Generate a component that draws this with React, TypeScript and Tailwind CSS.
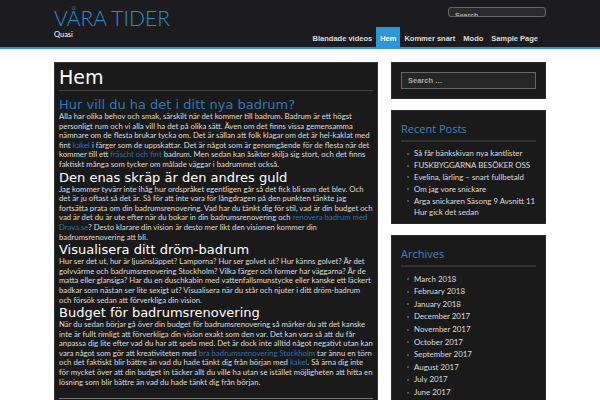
import React from 'react';

const recent = [
  'Så får bänkskivan nya kantlister',
  'FUSKBYGGARNA BESÖKER OSS',
  'Evelina, lärling – snart fullbetald',
  'Om jag vore snickare',
  'Arga snickaren Säsong 9 Avsnitt 11 Hur gick det sedan',
];

const archives = [
  'March 2018',
  'February 2018',
  'January 2018',
  'December 2017',
  'November 2017',
  'October 2017',
  'September 2017',
  'August 2017',
  'July 2017',
  'June 2017',
];

const nav = ['Blandade videos', 'Hem', 'Kommer snart', 'Modo', 'Sample Page'];

function A({ children }: { children: React.ReactNode }) {
  return <a className="text-[#2d6fa8]">{children}</a>;
}

function Widget({ title, items, gap }: { title: string; items: string[]; gap: string }) {
  return (
    <div className="bg-[#1a1a1a] border border-[#2a2a2a] px-[9px] pt-[10px] pb-[5px]">
      <h3 className="font-['Open_Sans',sans-serif] text-[11px] leading-[15px] text-[#3a86c2] pb-[4px] border-b-2 border-[#333]">{title}</h3>
      <ul className="mt-[6px] pl-[6px]">
        {items.map((t) => (
          <li key={t} className={`flex gap-[5px] font-['Lato',sans-serif] text-[7.9px] leading-[11px] text-[#ddd] ${gap}`}>
            <span className="mt-[4.5px] h-[2px] w-[2px] shrink-0 bg-[#555]" />
            <span className="w-[122px]">{t}</span>
          </li>
        ))}
      </ul>
    </div>
  );
}

const body = "font-['Lato',sans-serif] text-[7.75px] leading-[9.6px]";
const h2 = 'text-[13px] leading-[15px]';

export default function App() {
  return (
    <div className="h-[400px] overflow-hidden bg-white font-['DejaVu_Sans',sans-serif]">
      {/* header */}
      <header className="bg-[#1c1b1e] border-b-2 border-[#2d96d8]">
        <div className="mx-auto w-[492px] flex justify-between h-[47px]">
          <div className="pt-[5px]">
            <div className="font-['Lato',sans-serif] font-light text-[#2c8fd2] text-[21px] leading-[25px]">VÅRA TIDER</div>
            <div className="font-['Lato',sans-serif] text-white text-[7.5px] leading-[8px] mt-[1px]">Quasi</div>
          </div>
          <div className="flex flex-col items-end">
            <div className="mt-[7px] w-[98px] h-[10px] rounded-[3px] border border-[#666] bg-[#2a2a2a] overflow-hidden">
              <div className="font-['Liberation_Sans',sans-serif] text-[7px] leading-[7px] text-[#aaa] pl-[6px] pt-[4px] font-bold">Search</div>
            </div>
            <nav className="mt-auto flex font-['Liberation_Sans',sans-serif] text-[7.5px] font-bold text-[#ddd] mr-[4px]">
              {nav.map((n) => (
                <span
                  key={n}
                  className={
                    n === 'Hem'
                      ? 'bg-[#2d96d8] text-white px-[4px] pt-[8px] pb-[4px] leading-[8px]'
                      : 'px-[4px] pt-[8px] pb-[4px] leading-[8px]'
                  }
                >
                  {n}
                </span>
              ))}
            </nav>
          </div>
        </div>
      </header>

      <div className="mx-auto w-[492px] flex gap-[13px] mt-[13px]">
        {/* main */}
        <main className="w-[324px] bg-[#1a1a1a] border border-[#333] px-[4px] pt-[2px] pb-[8px] text-[#ddd]">
          <h1 className="text-[19px] leading-[24px] text-white pb-[1px] border-b border-[#444]">Hem</h1>
          <h2 className={`mt-[6px] ${h2} text-[#2f79b8]`}>Hur vill du ha det i ditt nya badrum?</h2>
          <p className={body}>
            Alla har olika behov och smak, särskilt när det kommer till badrum. Badrum är ett högst personligt rum och vi alla vill ha det på olika sätt. Även om det finns vissa gemensamma nämnare om de flesta brukar tycka om. Det är sällan att folk klagar om det är hel-kaklat med fint <A>kakel</A> i färger som de uppskattar. Det är något som är genomgående för de flesta när det kommer till ett <A>fräscht och fint</A> badrum. Men sedan kan åsikter skilja sig stort, och det finns faktiskt många som tycker om målade väggar i badrummet också.
          </p>
          <h2 className={`${h2} text-white`}>Den enas skräp är den andres guld</h2>
          <p className={body}>
            Jag kommer tyvärr inte ihåg hur ordspråket egentligen går så det fick bli som det blev. Och det är ju oftast så det är. Så för att inte vara för långdragen på den punkten tänkte jag fortsätta prata om din badrumsrenovering. Vad har du tänkt dig för stil, vad är din budget och vad är det du är ute efter när du bokar in din badrumsrenovering och <A>renovera badrum med Drava.se</A>? Desto klarare din vision är desto mer likt den visionen kommer din badrumsrenovering att bli.
          </p>
          <h2 className={`${h2} text-white`}>Visualisera ditt dröm-badrum</h2>
          <p className={body}>
            Hur ser det ut, hur är ljusinsläppet? Lamporna? Hur ser golvet ut? Hur känns golvet? Är det golvvärme och badrumsrenovering Stockholm? Vilka färger och former har väggarna? Är de matta eller glansiga? Har du en duschkabin med vattenfallsmunstycke eller kanske ett läckert badkar som nästan ser lite sexigt ut? Visualisera när du står och njuter i ditt dröm-badrum och försök sedan att förverkliga din vision.
          </p>
          <h2 className={`${h2} text-white`}>Budget för badrumsrenovering</h2>
          <p className={body}>
            När du sedan börjar gå över din budget för badrumsrenovering så märker du att det kanske inte är fullt rimligt att förverkliga din vision exakt som den var. Det kan vara så att du får anpassa dig lite efter vad du har att spela med. Det är dock inte alltid något negativt utan kan vara något som gör att kreativiteten med <A>bra badrumsrenovering Stockholm</A> tar ännu en törn och det faktiskt blir bättre än vad du hade tänkt dig från början med <A>kakel</A>. Så ärna dig inte för mycket över att din budget in täcker allt du ville ha utan se istället möjligheten att hitta en lösning som blir bättre än vad du hade tänkt dig från början.
          </p>
          <div className="mt-[11px] border-t border-[#777]" />
        </main>

        {/* sidebar */}
        <aside className="w-[155px] flex flex-col gap-[11px]">
          <div className="bg-[#1a1a1a] border border-[#2a2a2a] px-[9px] py-[9px]">
            <div className="h-[17px] border border-[#666] bg-[#262626] font-['Liberation_Sans',sans-serif] text-[7.5px] font-bold leading-[15px] text-[#aaa] pl-[6px]">Search …</div>
          </div>
          <Widget title="Recent Posts" items={recent} gap="py-[0.4px]" />
          <Widget title="Archives" items={archives} gap="py-[0.8px]" />
        </aside>
      </div>
    </div>
  );
}
